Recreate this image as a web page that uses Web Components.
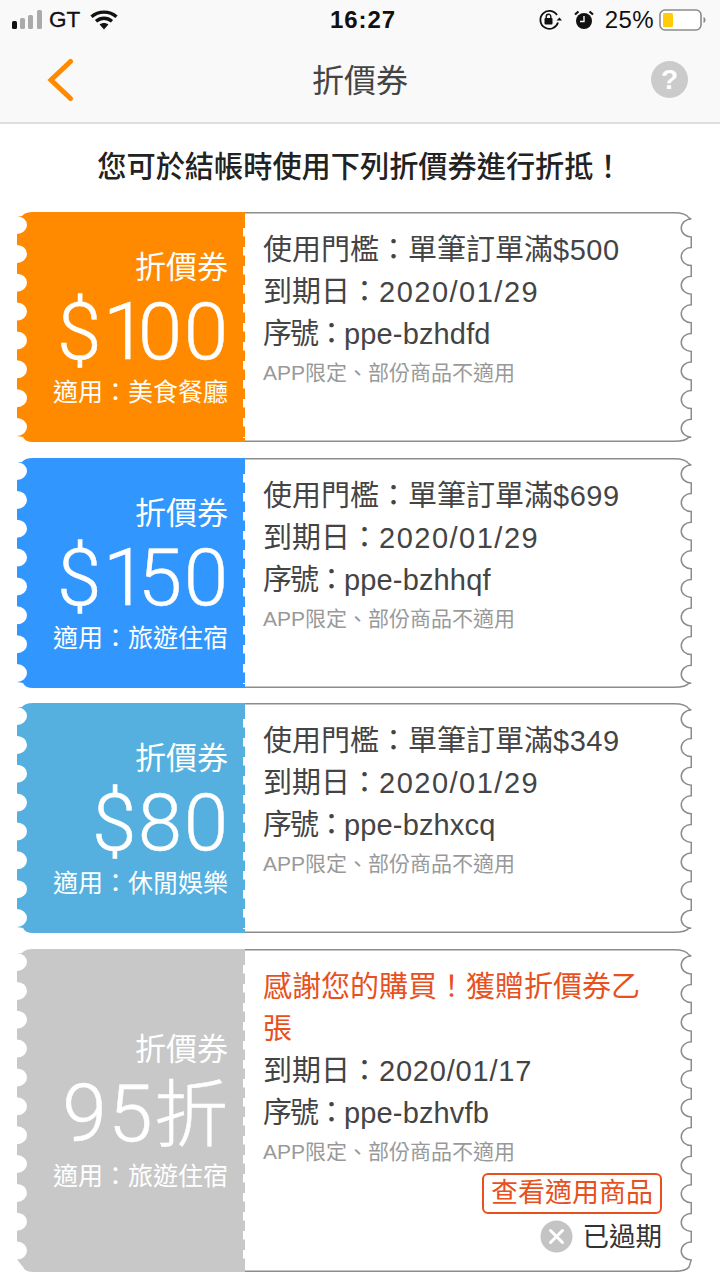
<!DOCTYPE html>
<html lang="zh-Hant">
<head>
<meta charset="utf-8">
<title>折價券</title>
<style>
  html, body { margin:0; background:#fff; }
  body { font-family:"Liberation Sans","Noto Sans CJK TC",sans-serif; width:720px; height:1280px; overflow:hidden; }
  /* latin runs are slotted, so these reach them from here */
  .price { letter-spacing:.5px; }
  .date { letter-spacing:1.5px; }
  .date.short { letter-spacing:.8px; }
  .tight { letter-spacing:-2px; }
  .serial { letter-spacing:.15px; }
</style>
</head>
<body>
<status-bar></status-bar>
<nav-bar>折價券</nav-bar>
<page-note>您可於結帳時使用下列折價券進行折抵！</page-note>
<coupon-list>
  <coupon-card color="#ff8a00" amount="$100" scope="適用：美食餐廳">
    <coupon-line>使用門檻：單筆訂單滿<span class="price">$500</span></coupon-line>
    <coupon-line>到期日：<span class="date">2020/01/29</span></coupon-line>
    <coupon-line><span class="tight">序號：</span><span class="serial">ppe-bzhdfd</span></coupon-line>
    <coupon-line kind="small">APP限定、部份商品不適用</coupon-line>
  </coupon-card>
  <coupon-card color="#3296ff" amount="$150" scope="適用：旅遊住宿">
    <coupon-line>使用門檻：單筆訂單滿<span class="price">$699</span></coupon-line>
    <coupon-line>到期日：<span class="date">2020/01/29</span></coupon-line>
    <coupon-line><span class="tight">序號：</span><span class="serial">ppe-bzhhqf</span></coupon-line>
    <coupon-line kind="small">APP限定、部份商品不適用</coupon-line>
  </coupon-card>
  <coupon-card color="#55b0e0" amount="$80" scope="適用：休閒娛樂">
    <coupon-line>使用門檻：單筆訂單滿<span class="price">$349</span></coupon-line>
    <coupon-line>到期日：<span class="date">2020/01/29</span></coupon-line>
    <coupon-line><span class="tight">序號：</span><span class="serial">ppe-bzhxcq</span></coupon-line>
    <coupon-line kind="small">APP限定、部份商品不適用</coupon-line>
  </coupon-card>
  <coupon-card color="#c8c8c8" amount="95折" scope="適用：旅遊住宿">
    <coupon-line kind="gift">感謝您的購買！獲贈折價券乙張</coupon-line>
    <coupon-line>到期日：<span class="date short">2020/01/17</span></coupon-line>
    <coupon-line><span class="tight">序號：</span><span class="serial">ppe-bzhvfb</span></coupon-line>
    <coupon-line kind="small">APP限定、部份商品不適用</coupon-line>
    <coupon-foot></coupon-foot>
  </coupon-card>
</coupon-list>

<script>
// Status bar, all icons inline
class StatusBar extends HTMLElement {
  constructor() {
    super();
    this.attachShadow({ mode: 'open' }).innerHTML = `
      <style>
        :host { display:grid; grid-template-columns:1fr auto 1fr; align-items:center; height:40px; padding:0 14px 0 12px; background:#f9f9f9; color:#111; font-size:24px; }
        .l, .r { display:flex; align-items:center; }
        .r { justify-content:flex-end; }
        .time { font-weight:700; font-size:24px; letter-spacing:.9px; margin-left:8px; }
        .gt { margin-left:7px; margin-right:10px; font-size:22.5px; -webkit-text-stroke:.3px #111; }
        svg { display:block; }
      </style>
      <div class="l">
        <svg width="30" height="20" viewBox="0 0 30 20">
          <rect x="0" y="11" width="5" height="8" rx="1.5" fill="#111"/>
          <rect x="8" y="8" width="5" height="11" rx="1.5" fill="#aaa"/>
          <rect x="16" y="5" width="5" height="14" rx="1.5" fill="#aaa"/>
          <rect x="25" y="0" width="5" height="19" rx="1.5" fill="#aaa"/>
        </svg>
        <span class="gt">GT</span>
        <svg width="28" height="20" viewBox="0 0 28 20" fill="none" stroke="#111" stroke-width="3.4">
          <path d="M1.5 6.8C8.5.6 19.5.6 26.5 6.8"/>
          <path d="M6 11.2c4.800-4 11.200-4 16 0"/>
          <path d="M14 19.5 9.600 14.600c2.600-2 6.200-2 8.800 0z" fill="#111" stroke="none"/>
        </svg>
      </div>
      <div class="time">16:27</div>
      <div class="r">
        <svg width="24" height="22" viewBox="0 0 24 22" fill="none" stroke="#111" stroke-width="1.8">
          <path d="M20 13.5A9 9 0 1 1 19 6"/>
          <path d="M21.5 8.5 24 11.500 18.500 11.500z" fill="#111" stroke="none"/>
          <rect x="6.5" y="9" width="8" height="6.500" rx="1" fill="#111" stroke="none"/>
          <path d="M8.200 9V7.500a2.300 2.300 0 0 1 4.600 0V9" stroke-width="1.4"/>
        </svg>
        <svg style="margin-left:12px" width="20" height="20" viewBox="0 0 20 20">
          <circle cx="10" cy="11" r="8" fill="#111"/>
          <path d="M10 6v5.500H6" fill="none" stroke="#f9f9f9" stroke-width="1.4"/>
          <path d="M1 4.500 4.500 1.500M19 4.500 15.500 1.500" stroke="#111" stroke-width="2.2"/>
        </svg>
        <span style="margin-left:11px;letter-spacing:.4px">25%</span>
        <svg style="margin-left:5px" width="47" height="22" viewBox="0 0 47 22">
          <rect x="1" y="1" width="41" height="20" rx="5" fill="#fff" stroke="#8a8a8a" stroke-width="1.6"/>
          <rect x="4" y="4" width="10" height="14" rx="1.5" fill="#ffcc0a"/>
          <path d="M44.500 8v6c1.500-.5 2-1.800 2-3s-.5-2.500-2-3z" fill="#8a8a8a"/>
        </svg>
      </div>`;
  }
}
customElements.define('status-bar', StatusBar);

class NavBar extends HTMLElement {
  constructor() {
    super();
    this.attachShadow({ mode: 'open' }).innerHTML = `
      <style>
        :host { display:grid; grid-template-columns:1fr auto 1fr; align-items:center; height:79px; padding-bottom:3px; background:#f9f9f9; border-bottom:2px solid #dedede; color:#444; font-size:32px; }
        .back { margin-left:47px; }
        .title { padding-bottom:3px; }
        .help { justify-self:end; margin-right:32px; width:37px; height:37px; border-radius:50%; background:#cbcbcb; color:#fff; font:700 28px/37px "Liberation Sans",sans-serif; text-align:center; }
        svg { display:block; }
      </style>
      <svg class="back" width="28" height="44" viewBox="0 0 28 44" fill="none" stroke="#ff8a00" stroke-width="5" stroke-linecap="round">
        <path d="M23.500 3.500 4 22l19.500 18.500"/>
      </svg>
      <div class="title"><slot></slot></div>
      <div class="help">?</div>`;
  }
}
customElements.define('nav-bar', NavBar);

class PageNote extends HTMLElement {
  constructor() {
    super();
    this.attachShadow({ mode: 'open' }).innerHTML = `
      <style>
        :host { display:block; padding:20px 0 22px; text-align:center; color:#222; font-size:29.2px; line-height:46px; font-weight:500; }
      </style>
      <slot></slot>`;
  }
}
customElements.define('page-note', PageNote);

class CouponList extends HTMLElement {
  constructor() {
    super();
    this.attachShadow({ mode: 'open' }).innerHTML = `
      <style>
        :host { display:flex; flex-direction:column; gap:15.67px; padding:0 28px 0 17px; }
      </style>
      <slot></slot>`;
  }
}
customElements.define('coupon-list', CouponList);

class CouponLine extends HTMLElement {
  constructor() {
    super();
    this.attachShadow({ mode: 'open' }).innerHTML = `
      <style>
        :host { display:block; font-size:29px; line-height:42px; color:#444; }
        :host([kind="small"]) { padding-top:1px; font-size:21px; line-height:34px; color:#999; }
        :host([kind="gift"]) { color:#e8501e; }
      </style>
      <slot></slot>`;
  }
}
customElements.define('coupon-line', CouponLine);

class CouponFoot extends HTMLElement {
  constructor() {
    super();
    this.attachShadow({ mode: 'open' }).innerHTML = `
      <style>
        :host { display:flex; flex-direction:column; align-items:flex-end; padding-top:4px; }
        .btn { box-sizing:border-box; height:41px; padding:0 7px; border:2px solid #e8501e; border-radius:6px; color:#e8501e; font-size:27px; line-height:37px; }
        .done { display:flex; align-items:center; gap:10px; margin-top:5px; color:#333; font-size:26.5px; line-height:36px; }
        svg { display:block; }
      </style>
      <div class="btn">查看適用商品</div>
      <div class="done">
        <svg width="33" height="33" viewBox="0 0 33 33">
          <circle cx="16.5" cy="16.5" r="16" fill="#c4c4c4"/>
          <path d="M10.500 10.500l12 12M22.500 10.500l-12 12" stroke="#fff" stroke-width="3" stroke-linecap="round"/>
        </svg>
        <span>已過期</span>
      </div>`;
  }
}
customElements.define('coupon-foot', CouponFoot);

// Ticket shape: the edge is drawn after layout, since the height comes from the content.
// Keep this define last so the lines inside already have their final size.
class CouponCard extends HTMLElement {
  constructor() {
    super();
    const root = this.attachShadow({ mode: 'open' });
    root.innerHTML = `
      <style>
        :host { display:block; position:relative; }
        svg { position:absolute; left:0; top:0; }
        .wrap { position:relative; display:grid; grid-template-columns:228px 1fr; min-height:230px; }
        .stub { display:flex; flex-direction:column; justify-content:center; align-items:flex-end; padding:2px 17px 0 0; color:#fff; white-space:nowrap; }
        .label { font-size:31px; line-height:44px; }
        .amount { margin-right:-1.5px; font-family:Roboto,"Noto Sans CJK TC",sans-serif; font-weight:300; font-size:80px; line-height:84px; letter-spacing:1.5px; -webkit-text-stroke:.5px #fff; }
        .amount .one { letter-spacing:-9.5px; }
        .amount .unit { font-size:74px; }
        .scope { font-size:25px; line-height:36px; }
        .body { padding:17px 30px 17px 18px; min-width:0; }
      </style>
      <svg class="edge" aria-hidden="true"></svg>
      <div class="wrap">
        <div class="stub">
          <div class="label">折價券</div>
          <div class="amount"></div>
          <div class="scope"></div>
        </div>
        <div class="body"><slot></slot></div>
      </div>`;
    this.root = root;
  }
  connectedCallback() {
    // the reference font has a narrow 1, and the unit sits a bit smaller than the digits
    this.root.querySelector('.amount').innerHTML = this.getAttribute('amount')
      .replace('1', '<span class="one">1</span>')
      .replace('折', '<span class="unit">折</span>');
    this.root.querySelector('.scope').textContent = this.getAttribute('scope');
    this.#drawEdge();
  }
  #drawEdge() {
    const w = this.offsetWidth, h = this.offsetHeight, stub = 228;
    const n = Math.floor((h - 23) / 28.86) + 1;
    const svg = this.root.querySelector('.edge');
    svg.setAttribute('width', w);
    svg.setAttribute('height', h);
    svg.setAttribute('viewBox', `0 0 ${w} ${h}`);
    let right = `M${stub} .75H${w - 18}Q${w - 6} .75 ${w - 3} 6`;
    for (let i = 0; i < n; i++) {
      const c = 16 + i * 28.6;
      right += `L${w - .75} ${(c - 9).toFixed(1)}A10 9 0 0 0 ${w - .75} ${(c + 9).toFixed(1)}`;
    }
    right += `L${w - 3} ${h - 5}Q${w - 6} ${h - .75} ${w - 18} ${h - .75}H${stub}`;
    let left = `M${stub} 0V${h}H16Q8 ${h} 6 ${h - 5}`;
    for (let i = n - 1; i >= 0; i--) {
      const c = 13 + i * 28.86;
      left += `L0 ${(c + 9).toFixed(1)}A10 9 0 0 0 0 ${(c - 9).toFixed(1)}`;
    }
    left += `L5 4Q8 0 16 0Z`;
    svg.innerHTML = `
      <path d="${right}" fill="#fff" stroke="#8c8c8c" stroke-width="1.5"/>
      <path d="${left}" fill="${this.getAttribute('color')}"/>
      <path d="M227 16V${h - 4}" stroke="#fff" stroke-width="2" stroke-dasharray="8.500 10.500"/>`;
  }
}
customElements.define('coupon-card', CouponCard);
</script>
</body>
</html>
